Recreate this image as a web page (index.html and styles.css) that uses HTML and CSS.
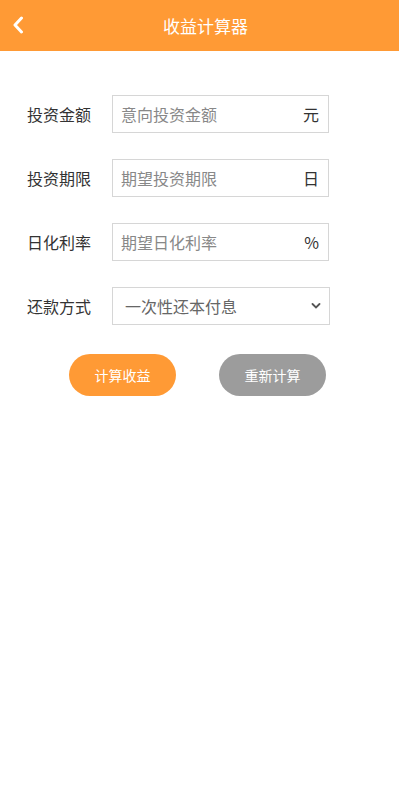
FILE: index.html
```html
<!DOCTYPE html>
<html lang="zh-CN">

<head>
    <meta charset="UTF-8">
    <meta name="viewport" content="width=device-width, initial-scale=1.0">
    <title>收益计算器</title>
    <link rel="stylesheet" href="styles.css">
</head>

<body>
    <header class="topbar">
        <a class="back" href="#">
            <svg width="12" height="18" viewBox="0 0 12 18">
                <path d="M9.5 2 L3 9 L9.5 16" fill="none" stroke="#fff" stroke-width="3" stroke-linecap="round" stroke-linejoin="round"/>
            </svg>
        </a>
        <h1>收益计算器</h1>
    </header>

    <form class="calc">
        <div class="row">
            <label>投资金额</label>
            <div class="field">
                <input type="text" placeholder="意向投资金额">
                <span class="unit">元</span>
            </div>
        </div>
        <div class="row">
            <label>投资期限</label>
            <div class="field">
                <input type="text" placeholder="期望投资期限">
                <span class="unit">日</span>
            </div>
        </div>
        <div class="row">
            <label>日化利率</label>
            <div class="field">
                <input type="text" placeholder="期望日化利率">
                <span class="unit">%</span>
            </div>
        </div>
        <div class="row">
            <label>还款方式</label>
            <div class="field select">
                <span class="value">一次性还本付息</span>
                <svg class="arrow" width="10" height="6" viewBox="0 0 10 6">
                    <path d="M1.5 1 L5 4.5 L8.5 1" fill="none" stroke="#555" stroke-width="1.8" stroke-linecap="round"/>
                </svg>
            </div>
        </div>
        <div class="actions">
            <button type="button" class="btn btn-main">计算收益</button>
            <button type="button" class="btn btn-reset">重新计算</button>
        </div>
    </form>
</body>

</html>
```

FILE: styles.css
```css
body {
    margin: 0;
    font-family: "Noto Sans CJK SC", "Liberation Sans", sans-serif;
    background-color: #fff;
    color: #333;
}

.topbar {
    height: 51px;
    background-color: #ff9a35;
    display: flex;
    align-items: center;
    justify-content: center;
    position: relative;
}

.topbar h1 {
    margin: 0 0 0 12px;
    font-size: 17px;
    font-weight: normal;
    color: #fff;
}

.back {
    position: absolute;
    left: 12px;
    top: 16px;
    display: flex;
}

.calc {
    padding: 44px 0 0 27px;
}

.row {
    display: flex;
    align-items: center;
    margin-bottom: 26px;
}

.row label {
    width: 85px;
    font-size: 16px;
    color: #333;
}

.field {
    width: 217px;
    height: 38px;
    box-sizing: border-box;
    border: 1px solid #d6d6d6;
    display: flex;
    align-items: center;
    padding: 0 9px 0 8px;
}

.field input {
    flex: 1;
    min-width: 0;
    border: none;
    outline: none;
    font-family: inherit;
    font-size: 16px;
    color: #333;
    padding: 0;
    background: transparent;
}

.field input::placeholder {
    color: #888;
}

.unit {
    font-size: 16px;
    color: #333;
}

.field.select {
    width: 218px;
    padding: 0 8px 0 12px;
    justify-content: space-between;
}

.select .value {
    font-size: 16px;
    color: #666;
}

.actions {
    display: flex;
    gap: 43px;
    margin-left: 42px;
    padding-top: 3px;
}

.btn {
    width: 107px;
    height: 42px;
    border: none;
    border-radius: 21px;
    color: #fff;
    font-family: inherit;
    font-size: 14px;
    cursor: pointer;
}

.btn-main {
    background-color: #ff9a35;
}

.btn-reset {
    background-color: #9c9c9c;
}
```
